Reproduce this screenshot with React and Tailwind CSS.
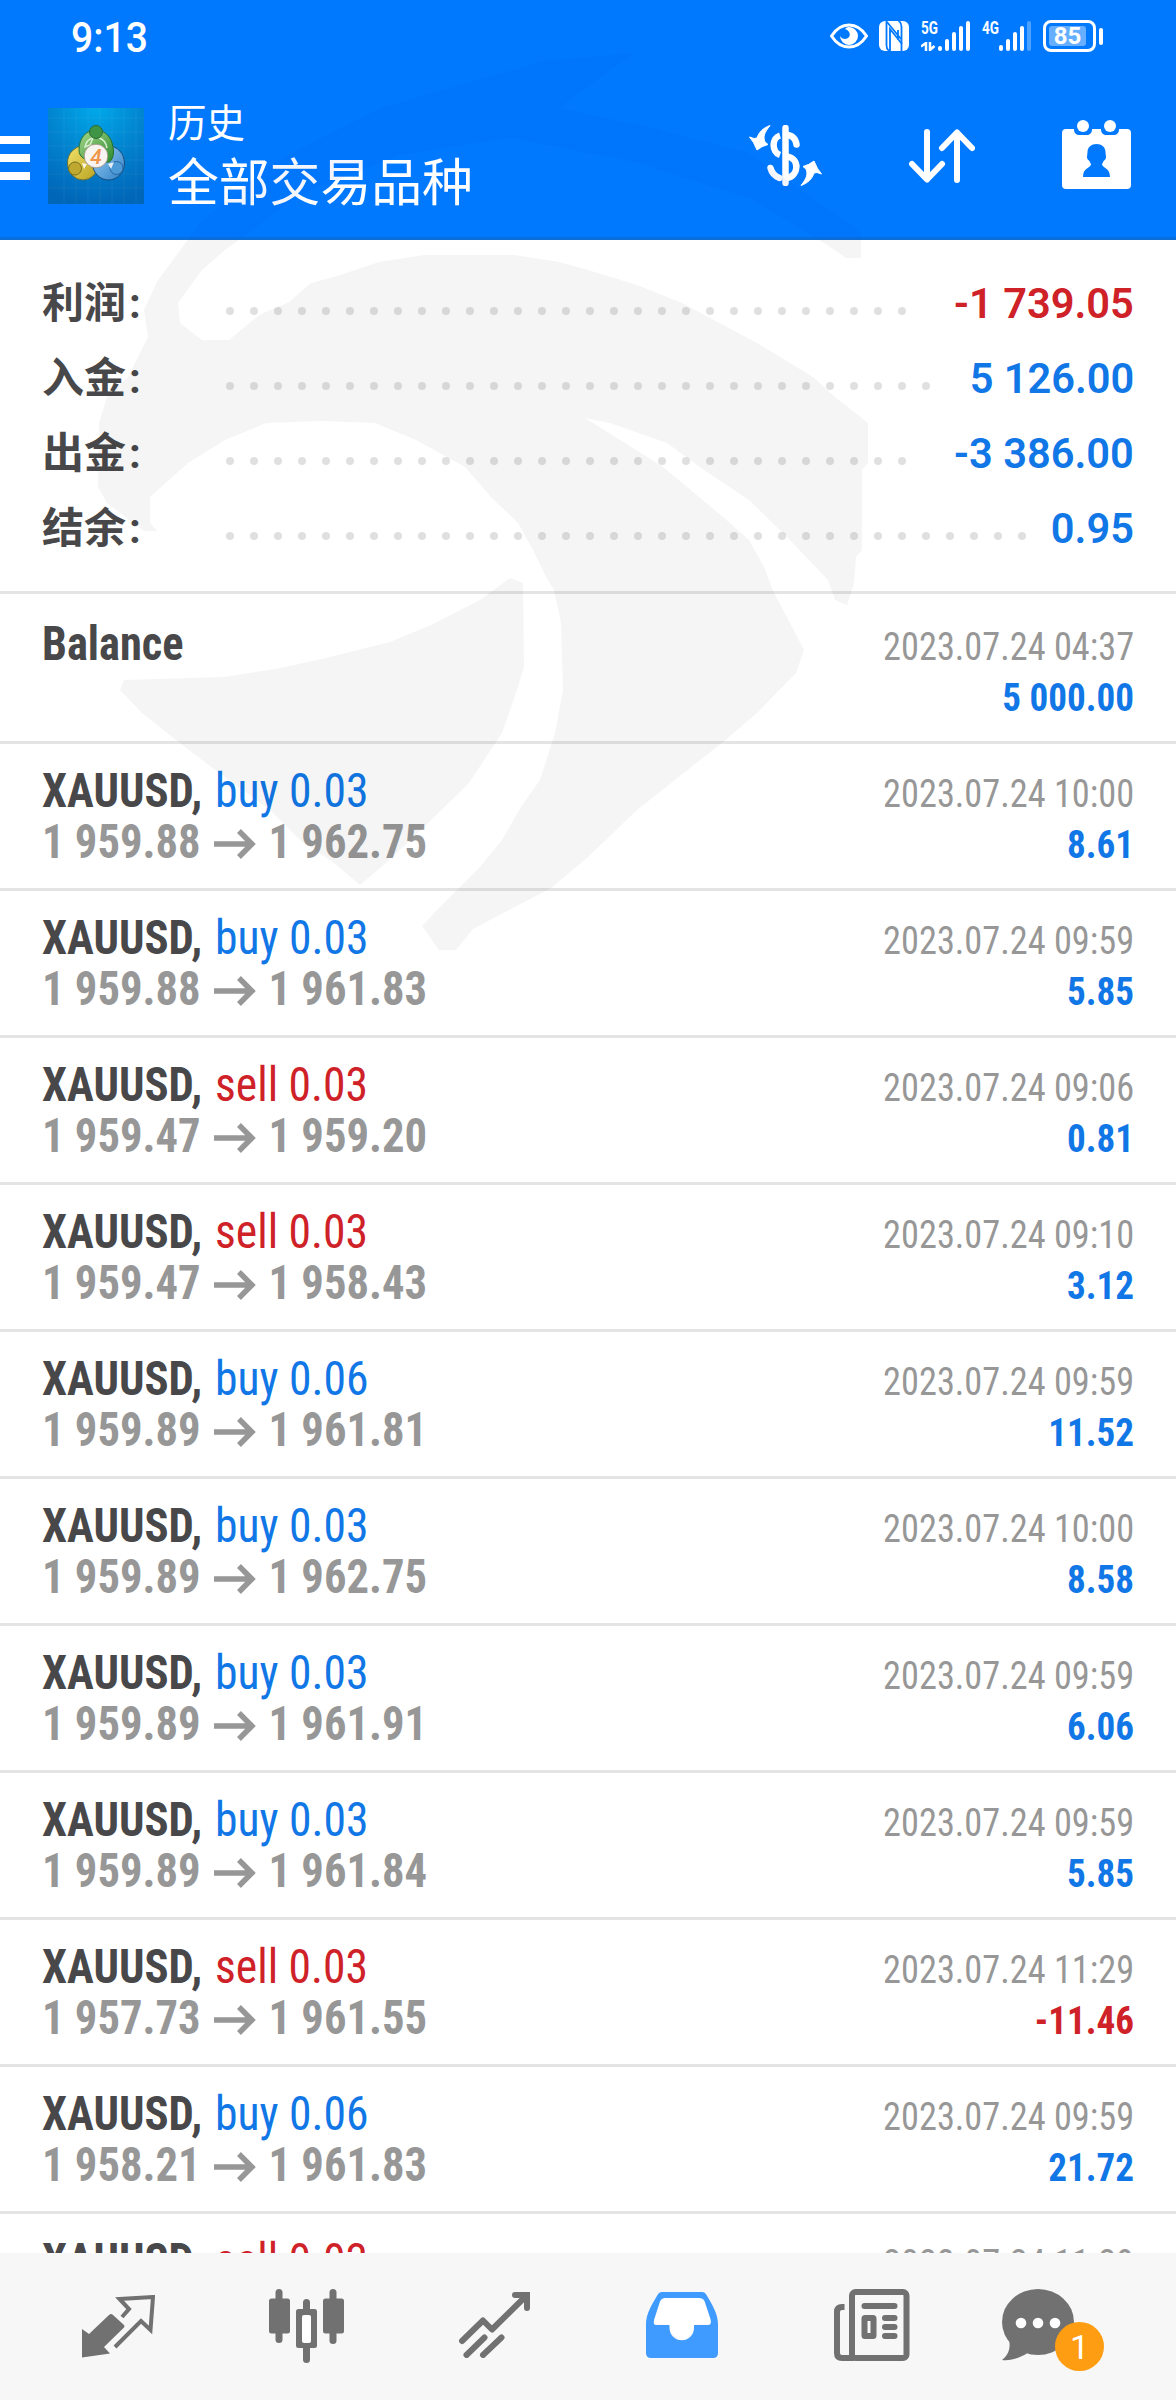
import React from 'react';

const summary = [
  { label: '利润', value: '-1 739.05', dots: 29, color: 'text-[#cf2128]' },
  { label: '入金', value: '5 126.00', dots: 30, color: 'text-[#1177e6]' },
  { label: '出金', value: '-3 386.00', dots: 29, color: 'text-[#1177e6]' },
  { label: '结余', value: '0.95', dots: 34, color: 'text-[#1177e6]' },
];

const deals = [
  { type: 'buy', volume: '0.03', open: '1 959.88', close: '1 962.75', time: '2023.07.24 10:00', profit: '8.61' },
  { type: 'buy', volume: '0.03', open: '1 959.88', close: '1 961.83', time: '2023.07.24 09:59', profit: '5.85' },
  { type: 'sell', volume: '0.03', open: '1 959.47', close: '1 959.20', time: '2023.07.24 09:06', profit: '0.81' },
  { type: 'sell', volume: '0.03', open: '1 959.47', close: '1 958.43', time: '2023.07.24 09:10', profit: '3.12' },
  { type: 'buy', volume: '0.06', open: '1 959.89', close: '1 961.81', time: '2023.07.24 09:59', profit: '11.52' },
  { type: 'buy', volume: '0.03', open: '1 959.89', close: '1 962.75', time: '2023.07.24 10:00', profit: '8.58' },
  { type: 'buy', volume: '0.03', open: '1 959.89', close: '1 961.91', time: '2023.07.24 09:59', profit: '6.06' },
  { type: 'buy', volume: '0.03', open: '1 959.89', close: '1 961.84', time: '2023.07.24 09:59', profit: '5.85' },
  { type: 'sell', volume: '0.03', open: '1 957.73', close: '1 961.55', time: '2023.07.24 11:29', profit: '-11.46' },
  { type: 'buy', volume: '0.06', open: '1 958.21', close: '1 961.83', time: '2023.07.24 09:59', profit: '21.72' },
  { type: 'sell', volume: '0.03', open: '1 957.73', close: '1 961.55', time: '2023.07.24 11:29', profit: '-11.46' },
];

function StatusBar() {
  return (
    <div className="flex h-[72px] items-center justify-between pl-[71px] pr-[73px]">
      <span className="origin-left scale-x-[0.93] pt-[3px] text-[42px] leading-none font-medium">9:13</span>
      <div className="flex items-center">
        <svg width="38" height="26" viewBox="0 0 38 26" fill="none">
          <path d="M1.5 13C6 6 12 2 19 2s13 4 17.5 11C32 20 26 24 19 24S6 20 1.5 13Z" stroke="#fff" strokeWidth="3" />
          <path fillRule="evenodd" d="M19 4a9 9 0 1 1-9 9c1 2 3 3 5 3 4 0 6-4 4-7-.8-1.400-2-2.500-4-2.800C16 4.700 17.500 4 19 4Z" fill="#fff" />
        </svg>
        <svg className="ml-[11px]" width="30" height="30" viewBox="0 0 30 30" fill="none">
          <rect width="30" height="30" rx="6" fill="#fff" />
          <path d="M7.500 0v24c0 3 1 5 3 6M22.500 30V6c0-3-1-5-3-6" stroke="#0079ff" strokeWidth="1.800" />
          <path d="M8 1l14 17M11 30V8l12 15M19 19V9" stroke="#0079ff" strokeWidth="1.800" />
        </svg>
        <div className="ml-3 flex h-[30px] w-[50px] items-end">
          <div className="flex h-[30px] w-[17px] flex-col justify-between">
            <span className="origin-left scale-x-75 text-[18px] leading-[13px] font-bold">5G</span>
            <svg width="17" height="9" viewBox="0 0 17 9" fill="none" stroke="#fff" strokeWidth="2.500">
              <path d="M0 4.500L5 1v8M9 0v8L13.500 4" />
            </svg>
          </div>
          <svg width="33" height="30" viewBox="0 0 33 30" stroke="#fff" strokeWidth="4" strokeLinecap="round">
            <path d="M2 27v1M9 20v8M16 13v15M23 7v21M30 2v26" />
          </svg>
        </div>
        <div className="ml-[11px] flex h-[30px] w-[50px] items-start">
          <span className="w-[17px] origin-left scale-x-75 text-[18px] leading-[13px] font-bold">4G</span>
          <svg width="33" height="30" viewBox="0 0 33 30" stroke="#fff" strokeWidth="4" strokeLinecap="round">
            <path d="M2 26v2M9 20v8M16 13v15M23 7v21" />
            <path d="M30 2v26" opacity="0.3" />
          </svg>
        </div>
        <div className="ml-[11px] flex items-center gap-[3px]">
          <div className="flex h-8 w-[53px] items-center rounded-[8px] border-[3px] border-white pl-[3px]">
            <div className="flex h-5 w-[37px] items-center justify-center rounded-[3px] bg-white/40">
              <span className="text-[24px] leading-none font-bold">85</span>
            </div>
          </div>
          <div className="h-[17px] w-1 rounded-full bg-white" />
        </div>
      </div>
    </div>
  );
}

function AppLogo() {
  return (
    <svg width="96" height="96" viewBox="0 0 96 96">
      <defs>
        <radialGradient id="sky" cx="0.5" cy="0" r="1">
          <stop offset="0" stopColor="#00a8ea" />
          <stop offset="0.55" stopColor="#0280cc" />
          <stop offset="1" stopColor="#0066b8" />
        </radialGradient>
        <linearGradient id="green" x1="0" y1="0" x2="1" y2="1">
          <stop offset="0" stopColor="#a9d98c" />
          <stop offset="1" stopColor="#2c8a2f" />
        </linearGradient>
        <linearGradient id="yellow" x1="0" y1="0" x2="1" y2="1">
          <stop offset="0" stopColor="#f3e36a" />
          <stop offset="1" stopColor="#b7a020" />
        </linearGradient>
        <linearGradient id="blue" x1="0" y1="0" x2="1" y2="1">
          <stop offset="0" stopColor="#9bd0f3" />
          <stop offset="1" stopColor="#2f80c8" />
        </linearGradient>
      </defs>
      <rect width="96" height="96" fill="url(#sky)" />
      <path
        d="M16 0v96M28 0v96M40 0v96M52 0v96M64 0v96M76 0v96M88 0v96M0 10h96M0 24h96M0 38h96M0 52h96M0 66h96M0 80h96"
        stroke="#fff"
        strokeOpacity="0.06"
      />
      <ellipse cx="35" cy="55" rx="15.500" ry="17" fill="url(#yellow)" stroke="#6a7030" />
      <ellipse cx="60.500" cy="55" rx="16" ry="17" fill="url(#blue)" stroke="#17497c" />
      <path d="M31 42C31 30 38 22 48 22s17.500 9 17.500 22c0 5-2 8-4 10H46C38 52 31 50 31 42Z" fill="url(#green)" stroke="#26702f" />
      <path d="M37 39c1-5 4-8 8-9l-3 7zM51 30c4 1 7 5 8 10" fill="none" stroke="#d8efcf" strokeWidth="1.500" />
      <circle cx="48" cy="24" r="6.500" fill="#3f9546" stroke="#2c6a34" />
      <circle cx="27" cy="60.500" r="6.500" fill="#bfa830" stroke="#77701f" />
      <circle cx="68.500" cy="60" r="6.500" fill="#4d9bd6" stroke="#2563a0" />
      <path d="M34 55l5 1-3 5zM60 56l6-2-3 7z" fill="#fff" opacity="0.85" />
      <circle cx="48" cy="48" r="11.800" fill="#f8f4f2" stroke="#a08f80" strokeWidth="0.800" />
      <text x="48" y="55.500" textAnchor="middle" fontSize="21" fontStyle="italic" fontWeight="500" fill="#f0964a" fontFamily="Roboto">4</text>
    </svg>
  );
}

function DollarIcon() {
  const arrow = 'M21 .5C15 8 14 12 16 17L19 19.500Q13 21 8 25Q5 17 .5 12L5 13.500L8 13C10 7 14 3 21 .5Z';
  return (
    <svg width="73" height="61" viewBox="0 0 73 61" fill="none">
      <path d="M36.500 3v55" stroke="#fff" strokeWidth="6.500" strokeLinecap="round" />
      <path d="M31 10.500C22.500 13 22.500 27 31 30" stroke="#fff" strokeWidth="6.500" />
      <path d="M38 10c5 0 9 4 9.500 9.500M21.500 43c1 4 4 8 9 10" stroke="#fff" strokeWidth="6.500" strokeLinecap="round" />
      <path d="M38 31.500c13 2 12 19 0 21.500" stroke="#fff" strokeWidth="6.500" />
      <path d={arrow} fill="#fff" stroke="#fff" strokeWidth="1" />
      <path d={arrow} fill="#fff" stroke="#fff" strokeWidth="1" transform="rotate(180 36.500 30.500)" />
    </svg>
  );
}

function SortIcon() {
  return (
    <svg width="66" height="54" viewBox="0 0 66 54" fill="none" stroke="#fff" strokeWidth="6" strokeLinecap="round" strokeLinejoin="round">
      <path d="M18 3v47M3 35l15 15.500L33 35" />
      <path d="M48 51V4M33 19L48 3.500L63 19" />
    </svg>
  );
}

function CalendarIcon() {
  return (
    <svg width="69" height="69" viewBox="0 0 69 69">
      <path
        d="M4 9h8c0 4 2 6 6 6h6c4 0 6-2 6-6h9c0 4 2 6 6 6h6c4 0 6-2 6-6h8q4 0 4 4v52q0 4-4 4H4q-4 0-4-4V13q0-4 4-4Z"
        fill="#fff"
      />
      <circle cx="21" cy="6" r="6" fill="#fff" />
      <circle cx="48" cy="6" r="6" fill="#fff" />
      <path
        d="M34.500 24c5 0 9 3 9 8l.5 5c0 2-1 3-2 3.500-1 2-2 3-2 4 1 4 8 3 8 12.500H21c0-9.500 7-8.500 8-12.500 0-1-1-2-2-4-1-.5-2-1.500-2-3.500l.5-5c0-5 4-8 9-8Z"
        fill="#0079ff"
      />
    </svg>
  );
}

function Header() {
  return (
    <header className="h-60 border-b-[3px] border-[#0a6fdb] bg-[#0079ff] text-white">
      <StatusBar />
      <div className="flex h-[165px] items-start">
        <div className="mt-16 flex w-[30px] flex-col gap-[10px]">
          <div className="h-2 bg-white" />
          <div className="h-2 bg-white" />
          <div className="h-2 bg-white" />
        </div>
        <div className="mt-9 ml-[18px]">
          <AppLogo />
        </div>
        <div className="mt-5 ml-6 flex flex-col font-['Noto_Sans_CJK_SC']">
          <span className="text-[38.500px] leading-[56px]">历史</span>
          <span className="-mt-[2px] text-[50.800px] leading-[66px]">全部交易品种</span>
        </div>
        <div className="mt-12 mr-[45px] ml-auto flex items-start">
          <div className="mt-[5px]">
            <DollarIcon />
          </div>
          <div className="mt-[9px] ml-[87px]">
            <SortIcon />
          </div>
          <div className="ml-[87px]">
            <CalendarIcon />
          </div>
        </div>
      </div>
    </header>
  );
}

function Summary() {
  return (
    <section className="h-[354px] border-b-[3px] border-[#e4e4e4] px-[42px] pt-[26px]">
      {summary.map((row) => (
        <div key={row.label} className="flex h-[75px] items-center">
          <span className="w-[184px] font-['Roboto','Noto_Sans_CJK_SC'] text-[42px] leading-[75px] font-bold text-[#48484a]">
            {row.label}
            <span className="ml-[3px]">:</span>
          </span>
          <div className="flex gap-4 pt-[15px]">
            {Array.from({ length: row.dots }, (_, i) => (
              <span key={i} className="size-2 rounded-full bg-black/12" />
            ))}
          </div>
          <span className={`ml-auto origin-right scale-x-[0.99] text-[42px] leading-[75px] font-semibold ${row.color}`}>
            {row.value}
          </span>
        </div>
      ))}
    </section>
  );
}

function DealRow({ deal }) {
  return (
    <div className="flex h-[147px] shrink-0 justify-between border-b-[3px] border-[#e4e4e4] px-[42px] font-stretch-75%">
      <div className="pt-[21px] text-[48px] leading-[51px] whitespace-nowrap">
        <div className="flex">
          <span className="w-[173px] origin-left scale-x-[0.932] font-bold text-[#48484a]">XAUUSD,</span>
          <span className={`origin-left scale-x-[0.95] ${deal.type === 'buy' ? 'text-[#1177e6]' : 'text-[#cf2128]'}`}>
            {deal.type} {deal.volume}
          </span>
        </div>
        <div className="flex origin-left scale-x-[0.93] items-center font-bold text-[#979797]">
          <span>{deal.open}</span>
          <svg className="mx-[14px] mt-1" width="45" height="30" viewBox="0 0 42 30" preserveAspectRatio="none" fill="none" stroke="currentColor" strokeWidth="5.500">
            <path d="M0 15h38M25 2l13 13-13 13" />
          </svg>
          <span>{deal.close}</span>
        </div>
      </div>
      <div className="pt-6 text-right text-[39.500px] leading-[51px]">
        <div className="origin-right scale-x-[0.919] text-[#979797]">{deal.time}</div>
        <div className={`origin-right scale-x-[0.94] font-bold ${deal.profit.startsWith('-') ? 'text-[#cf2128]' : 'text-[#1177e6]'}`}>
          {deal.profit}
        </div>
      </div>
    </div>
  );
}

function Watermark() {
  return (
    <svg className="pointer-events-none absolute top-0 left-0" width="1176" height="1000" viewBox="0 0 1176 1000" fill="url(#shade)">
      <defs>
        <linearGradient id="shade" gradientUnits="userSpaceOnUse" x1="0" y1="0" x2="0" y2="1000">
          <stop offset="0" stopColor="#0030c0" stopOpacity="0.045" />
          <stop offset="0.24" stopColor="#0030c0" stopOpacity="0.045" />
          <stop offset="0.24" stopColor="#000" stopOpacity="0.04" />
          <stop offset="1" stopColor="#000" stopOpacity="0.04" />
        </linearGradient>
      </defs>
      <path d="M634 53L548 60L462 84L381 108L336 130L270 165L201 222L173 260L158 280L144 310L148 337L128 377L107 397L99 423L98 487L107 503L144 531H157L150 523V497L188 463L225 440L266 423L322 421L375 423L416 440L465 467L491 497L518 523L533 550L546 577L554 590L561 623L563 690L555 733L540 780L521 807L502 840L480 867L437 910L422 926L439 950H456L473 929L551 888L588 857L637 810L723 742L757 713L796 673L804 650L790 623L774 593L764 567L749 540L723 517L663 467L625 443L585 418L610 423L667 443L704 470L749 500L787 537L828 580L835 600L847 605L854 583L856 557L862 550V470L868 463V423L835 397L813 377L757 343L682 303L637 285L588 270L559 262L514 255H424L379 262L334 277L311 283L289 302L259 315L229 340H202L180 323L178 303L202 270L225 250L300 195L400 155L510 138L634 162L749 198L829 246L846 258H861V232L749 153L645 126L559 108Z" />
      <path d="M124 680L225 677L281 668L326 658L390 642L431 625L480 600L510 578L523 583L524 667L517 690L502 733L469 783L424 827L386 863L360 885L334 863L300 840L270 810L206 763L176 740L142 713L120 690Z" />
    </svg>
  );
}

function BottomNav() {
  return (
    <nav className="grid h-[147px] grid-cols-6 items-start justify-items-center bg-[#f7f7f7] px-6 pt-9 text-[#717171]">
      <svg className="mt-[6px]" width="73" height="63" viewBox="0 0 73 63">
        <path d="M40 22L47 14L37.500 4L71 2L68.500 35L59 26L33 52" fill="none" stroke="currentColor" strokeWidth="4" />
        <path d="M0 34L7 39L27 20q2-2 4 0L42 30q1 1 0 2.500L22 52L28 58.500L0 62.500Z" fill="currentColor" />
      </svg>
      <svg width="75" height="74" viewBox="0 0 75 74" fill="currentColor">
        <rect x="6.500" width="7" height="54" rx="3.500" />
        <rect y="9.500" width="21" height="35" rx="2.500" />
        <rect x="34" y="10" width="7" height="16" rx="3.500" />
        <rect x="34" y="54" width="7" height="20" rx="3.500" />
        <rect x="27" y="20" width="21" height="39" rx="2.500" />
        <rect x="33" y="26" width="9" height="28" rx="2" fill="#fff" />
        <rect x="60.500" width="7" height="55" rx="3.500" />
        <rect x="54" y="9.500" width="21" height="35" rx="2.500" />
      </svg>
      <svg className="mt-[3px]" width="71" height="66" viewBox="0 0 71 66" fill="none" stroke="currentColor" strokeWidth="6">
        <path d="M3 49L24 28.500L33 37.500L67 4" strokeLinejoin="round" strokeLinecap="round" />
        <path d="M56 3h12v13" strokeLinecap="round" />
        <path d="M7.500 63L25.500 45.500M24 63L42.500 45.500" strokeLinecap="round" />
      </svg>
      <svg className="mt-[3px]" width="72" height="66" viewBox="0 0 72 66">
        <path d="M16 4H56L68 32H50V38L36 50L22 38V32H4Z" fill="#fff" />
        <path
          fillRule="evenodd"
          fill="#3f9bff"
          d="M16 0H56Q59 0 60.500 3C66 12 72 22 72 32V61Q72 66 67 66H5Q0 66 0 61V32C0 22 6 12 11.500 3Q13 0 16 0ZM19 6Q15.500 6 14 9.500L8 28Q7 33 10 33H23.500V36A12.250 12.250 0 0 0 48 36V33H62Q66 33 64.500 27L58.500 9Q57 6 53 6Z"
        />
      </svg>
      <svg className="ml-1" width="76" height="72" viewBox="0 0 76 72" fill="none" stroke="currentColor" strokeWidth="6">
        <rect x="18" y="3" width="54.500" height="66" rx="3.500" />
        <path d="M10.500 18H8q-5 0-5 5v41q0 5 5 5h12" />
        <rect x="30.500" y="29" width="9" height="18" rx="0.500" />
        <path d="M30.500 17h30M51 29h9.500M51 38h9.500M51 47h9.500" strokeLinecap="round" />
      </svg>
      <div className="relative mr-10">
        <svg width="72" height="72" viewBox="0 0 72 72" fill="currentColor">
          <ellipse cx="36" cy="33" rx="36" ry="33" />
          <path d="M7 50C9 60 6 66 0 71c9 1 17-2 25-6.500Z" />
          <circle cx="19" cy="34" r="5.300" fill="#fff" />
          <circle cx="36" cy="34" r="5.300" fill="#fff" />
          <circle cx="53" cy="34" r="5.300" fill="#fff" />
        </svg>
        <div className="absolute top-[33px] left-[53px] flex size-[49px] items-center justify-center rounded-full bg-[#ff9d12]">
          <span className="text-[34px] leading-none text-white">1</span>
        </div>
      </div>
    </nav>
  );
}

export default function App() {
  return (
    <div className="relative flex h-[2400px] w-[1176px] flex-col overflow-hidden bg-white font-['Roboto','Noto_Sans_CJK_SC',sans-serif]">
      <Header />
      <Summary />
      <main className="flex h-[1659px] flex-col overflow-hidden">
        <div className="flex h-[150px] shrink-0 justify-between border-b-[3px] border-[#e4e4e4] px-[42px] font-stretch-75%">
          <div className="origin-left scale-x-[0.925] pt-6 text-[48px] leading-[51px] font-bold text-[#48484a]">Balance</div>
          <div className="pt-[27px] text-right text-[39.500px] leading-[51px]">
            <div className="origin-right scale-x-[0.919] text-[#979797]">2023.07.24 04:37</div>
            <div className="origin-right scale-x-[0.94] font-bold text-[#1177e6]">5 000.00</div>
          </div>
        </div>
        {deals.map((deal, i) => (
          <DealRow key={i} deal={deal} />
        ))}
      </main>
      <BottomNav />
      <Watermark />
    </div>
  );
}
